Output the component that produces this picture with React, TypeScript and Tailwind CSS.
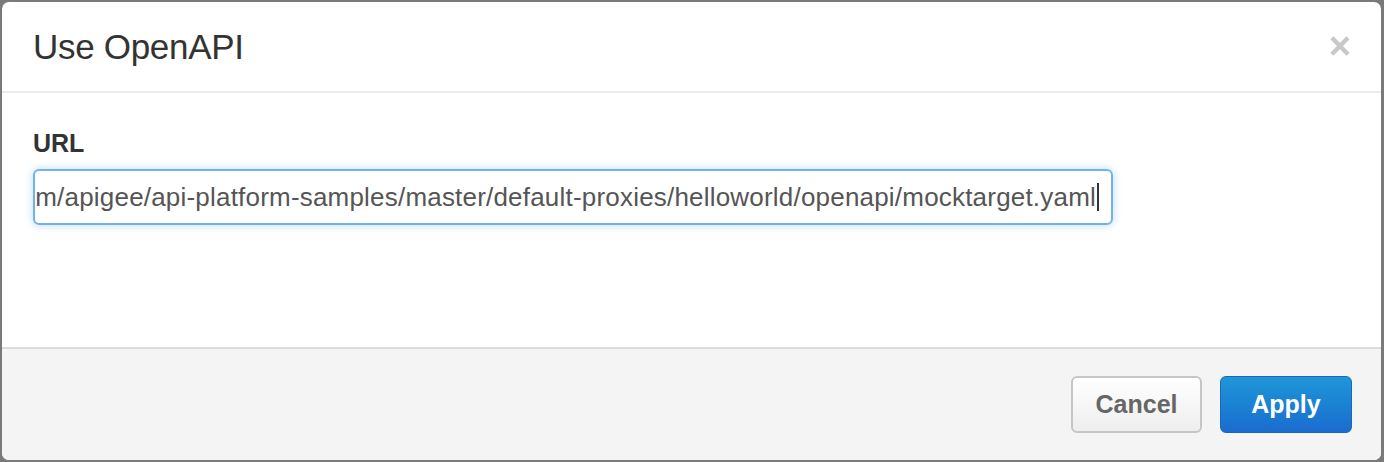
const url =
  "https://raw.githubusercontent.com/apigee/api-platform-samples/master/default-proxies/helloworld/openapi/mocktarget.yaml";

export default function App() {
  return (
    <div className="h-[462px] w-[1384px] bg-[#7a7a7a] pl-[2px] pr-[3px] pt-[2px] pb-[2px] font-['Liberation_Sans',Arial,sans-serif]">
      <div className="flex h-full flex-col overflow-hidden rounded-[7px] bg-white">
        {/* Header */}
        <div className="flex h-[91px] items-center justify-between border-b-2 border-[#ececec] pl-[31px] pr-[30px]">
          <h1 className="mt-[2px] text-[35px] font-light tracking-[-0.3px] text-[#333]">Use OpenAPI</h1>
          <span className="-mt-[1px] text-[38px] font-bold leading-none text-[#c8c8c8]">×</span>
        </div>

        {/* Body */}
        <div className="flex-1 pl-[31px] pr-[268px] pt-[38px]">
          <label className="block text-[25px] font-bold leading-none text-[#333]">URL</label>
          <div className="mt-[13px] flex h-[56px] items-center justify-end overflow-hidden rounded-[6px] border-2 border-[#72b2ec] pr-[12px] shadow-[0_0_8px_rgba(102,175,233,0.45)]">
            <span className="whitespace-nowrap text-[26px] tracking-[0.2px] text-[#555]">{url}</span>
            <span className="ml-[1px] h-[28px] w-[2px] shrink-0 bg-[#333]" />
          </div>
        </div>

        {/* Footer */}
        <div className="flex h-[113px] items-start justify-end gap-[18px] border-t-2 border-[#dcdcdc] bg-[#f4f4f4] pr-[29px] pt-[27px]">
          <button
            type="button"
            className="h-[57px] w-[131px] rounded-[6px] border-2 border-[#c3c7ca] bg-gradient-to-b from-[#ffffff] to-[#eeeeee] text-[25px] font-bold text-[#666]"
          >
            Cancel
          </button>
          <button
            type="button"
            className="h-[57px] w-[132px] rounded-[6px] border border-[#1a68b8] bg-gradient-to-b from-[#1f96d8] to-[#1b6ccf] text-[25px] font-bold text-white"
          >
            Apply
          </button>
        </div>
      </div>
    </div>
  );
}
